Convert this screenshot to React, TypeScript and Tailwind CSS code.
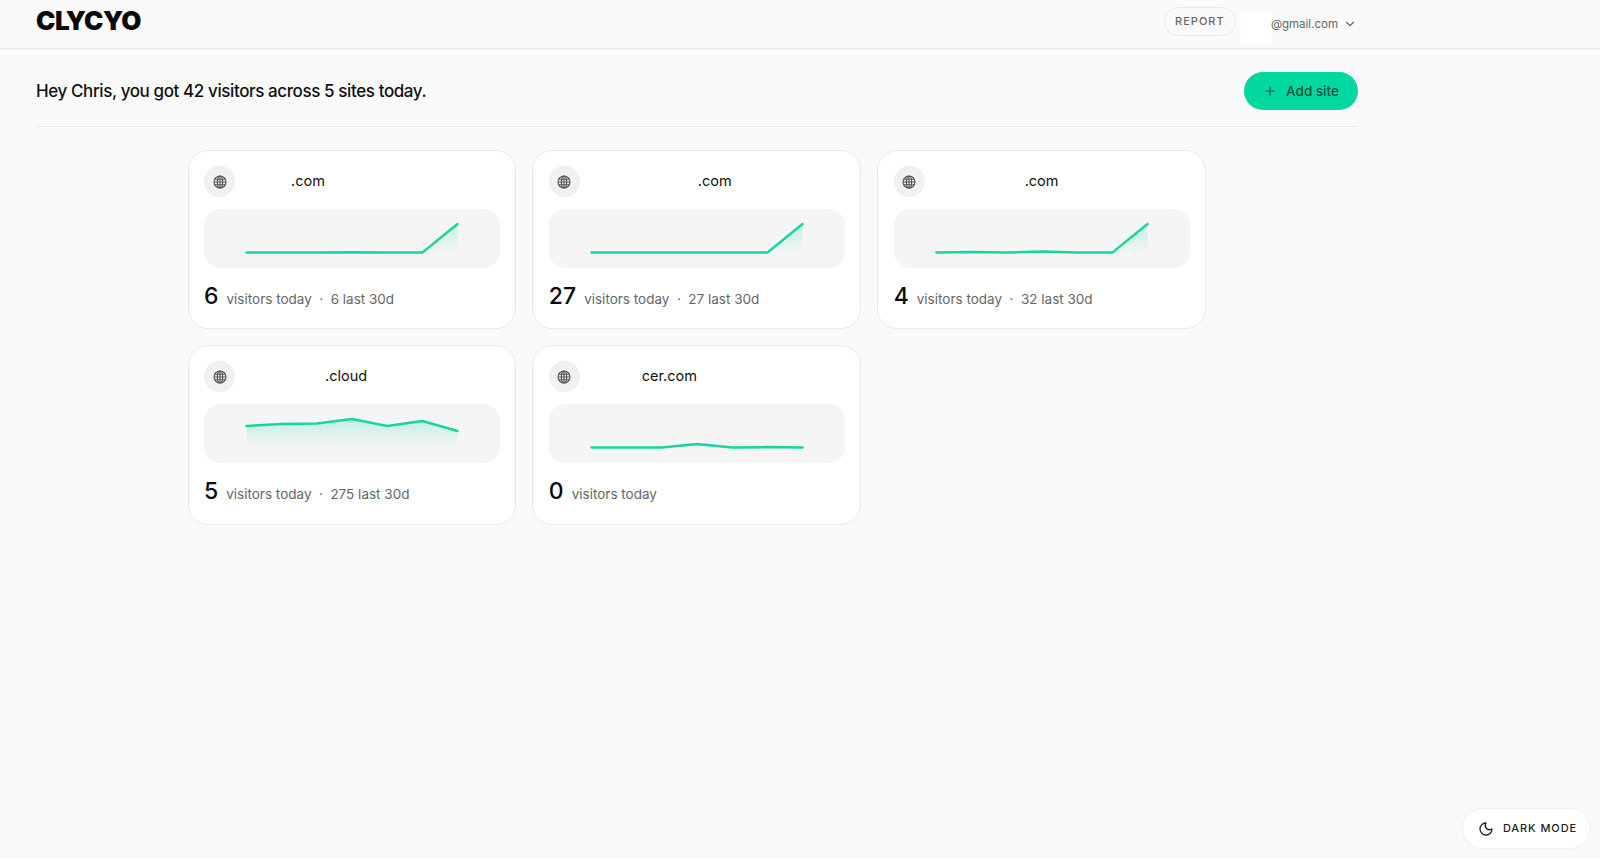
import { ChevronDown, Moon, Plus } from "lucide-react";

const X = [0.5, 35.67, 70.83, 106, 141.17, 176.33, 211.5];

type Site = { spacer: number; name: string; count: string; rest?: string; ys: number[] };

const sites: Site[] = [
  { spacer: 44, name: ".com", count: "6", rest: "6 last 30d", ys: [43.6, 43.6, 43.6, 43.2, 43.6, 43.6, 15] },
  { spacer: 106, name: ".com", count: "27", rest: "27 last 30d", ys: [43.6, 43.6, 43.6, 43.6, 43.6, 43.6, 15] },
  { spacer: 88, name: ".com", count: "4", rest: "32 last 30d", ys: [43.6, 43.1, 43.6, 42.4, 43.6, 43.6, 15] },
  { spacer: 78, name: ".cloud", count: "5", rest: "275 last 30d", ys: [22, 20, 19.5, 15, 22, 17, 27] },
  { spacer: 50, name: "cer.com", count: "0", ys: [43.6, 43.6, 43.6, 40, 43.6, 43.1, 43.6] },
];

function GlobeIcon() {
  return (
    <svg width="14" height="14" viewBox="0 0 14 14" fill="none" stroke="#555555" strokeWidth="1.1">
      <circle cx="7" cy="7" r="6" />
      <ellipse cx="7" cy="7" rx="2.6" ry="6" />
      <path d="M7 1v12M1 7h12M1.8 4.2h10.4M1.8 9.8h10.4" />
    </svg>
  );
}

function Spark({ ys, id }: { ys: number[]; id: string }) {
  const line = ys.map((y, i) => `${X[i]},${y}`).join(" ");
  const area = `0.5,44 ${line} 211.5,44`;
  return (
    <svg width="216" height="59" viewBox="-2 0 216 59" fill="none">
      <defs>
        <linearGradient id={id} x1="0" y1="0" x2="0" y2="1">
          <stop offset="0" stopColor="#00d8a0" stopOpacity="0.2" />
          <stop offset="1" stopColor="#00d8a0" stopOpacity="0" />
        </linearGradient>
      </defs>
      <polygon points={area} fill={`url(#${id})`} />
      <polyline points={line} stroke="#14d6a2" strokeWidth="2.5" strokeLinejoin="round" strokeLinecap="round" />
    </svg>
  );
}

function Card({ site, index }: { site: Site; index: number }) {
  return (
    <div className="rounded-[20px] border border-[#e9e9e9] bg-white px-[15.5px] pt-[15px]">
      <div className="flex items-center gap-3">
        <div className="flex h-[31px] w-[31px] items-center justify-center rounded-full border border-[#ececec] bg-[#f1f1f1]">
          <GlobeIcon />
        </div>
        <div className="-mt-px flex text-[14.5px] leading-5 text-[#111111]">
          <span style={{ width: site.spacer }} />
          <span>{site.name}</span>
        </div>
      </div>
      <div className="mt-[12px] flex h-[59px] items-start justify-center rounded-[16px] bg-[#f5f5f5]">
        <Spark ys={site.ys} id={`spark-${index}`} />
      </div>
      <div className="mt-[14px] flex items-baseline">
        <span className="text-[23px] leading-7 font-medium text-[#0a0a0a]">{site.count}</span>
        <span className="ml-2 text-[13.5px] text-[#666666]">visitors today</span>
        {site.rest && (
          <>
            <span className="mx-[7.5px] text-[13.5px] text-[#666666]">·</span>
            <span className="text-[13.5px] text-[#666666]">{site.rest}</span>
          </>
        )}
      </div>
    </div>
  );
}

export default function App() {
  return (
    <div className="relative h-[858px] overflow-hidden bg-[#fafafa] font-['Inter',sans-serif]">
      <header className="h-[49px] border-b border-[#e8e8e8] pl-9">
        <div className="flex h-full w-[1322px] items-start justify-between">
          <div className="mt-[3px] text-[26px] leading-9 font-black tracking-[-0.5px] text-[#0a0a0a]">CLYCYO</div>
          <div className="flex items-start pr-[1px]">
            <button className="mt-[7px] flex h-[29px] w-[72px] items-center justify-center rounded-full border border-[#e8e8e8] text-[11px] font-medium tracking-[1px] text-[#666666]">
              REPORT
            </button>
            <div className="mt-[14px] ml-[5px] h-[27px] w-[30px] bg-white" />
            <div className="mt-[16px] flex items-center text-[11.5px] leading-4 text-[#666666]">
              <span>@gmail.com</span>
              <ChevronDown className="ml-[5px] h-[14px] w-[14px]" strokeWidth={2} />
            </div>
          </div>
        </div>
      </header>

      <main className="ml-9 w-[1322px]">
        <div className="flex h-[78px] items-start justify-between border-b border-[#e8e8e8] pt-[23px]">
          <h1 className="mt-[6px] text-[17px] leading-[26px] font-medium tracking-[-0.4px] text-[#111111]">
            Hey Chris, you got 42 visitors across 5 sites today.
          </h1>
          <button className="flex h-[38px] w-[114px] items-center justify-center gap-[9px] rounded-full bg-[#00d8a0] text-[13.5px] font-medium text-[#064e3b]">
            <Plus className="h-[14px] w-[14px]" strokeWidth={1.8} />
            Add site
          </button>
        </div>
        <div className="mt-[23px] ml-[151.5px] grid w-[1018.5px] grid-cols-3 grid-rows-[179px_180px] gap-x-4 gap-y-4">
          {sites.map((s, i) => (
            <Card key={i} site={s} index={i} />
          ))}
        </div>
      </main>

      <button className="absolute top-[808px] left-[1462px] flex h-[41px] w-[129px] items-center justify-center gap-[9px] rounded-full border border-[#efefef] bg-white pl-[2px] text-[11px] font-medium tracking-[0.9px] text-[#222222]">
        <Moon className="h-[16px] w-[16px] text-[#222222]" strokeWidth={2} />
        DARK MODE
      </button>
    </div>
  );
}
